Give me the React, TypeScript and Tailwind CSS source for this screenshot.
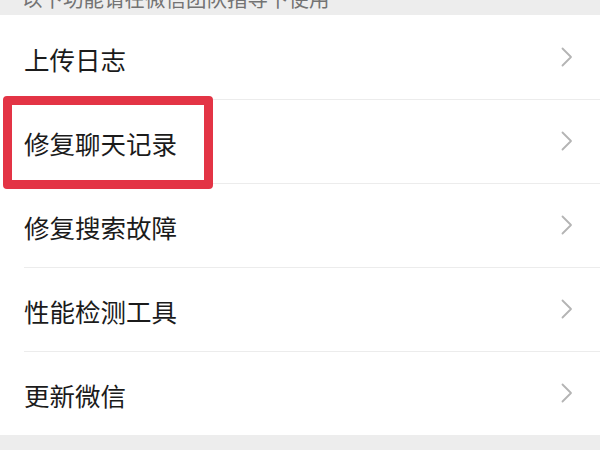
const items = ["上传日志", "修复聊天记录", "修复搜索故障", "性能检测工具", "更新微信"];

function Chevron() {
  return (
    <svg width="12" height="20" viewBox="0 0 12 20" fill="none" className="shrink-0">
      <path d="M1.5 1.5 L10 10 L1.5 18.5" stroke="#b4b4b4" strokeWidth="1.8" strokeLinecap="round" strokeLinejoin="round" />
    </svg>
  );
}

export default function App() {
  return (
    <div
      className="w-[600px] h-[450px] overflow-hidden bg-[#ededed] relative"
      style={{ fontFamily: '"Noto Sans CJK SC", "Noto Sans", sans-serif' }}
    >
      <div className="h-[15px] overflow-hidden pl-[22px]">
        <p className="text-[20.5px] leading-[20px] -mt-[12px] text-[#737373] whitespace-nowrap">
          以下功能请在微信团队指导下使用
        </p>
      </div>

      <div className="bg-white">
        {items.map((label, i) => (
          <div key={label} className="relative h-[84px] pl-[24px]">
            {i > 0 && <div className="absolute top-0 left-[24px] right-0 h-px bg-[#ececec]" />}
            <div className="h-full flex items-center justify-between pr-[27px]">
              <span className="text-[25.5px] leading-none text-[#1b1b1b] mt-[3px]">{label}</span>
              <Chevron />
            </div>
          </div>
        ))}
      </div>

      <div className="absolute left-[3px] top-[96px] w-[210px] h-[93px] border-[9.5px] border-[#e33445] rounded-[4px]" />
    </div>
  );
}
